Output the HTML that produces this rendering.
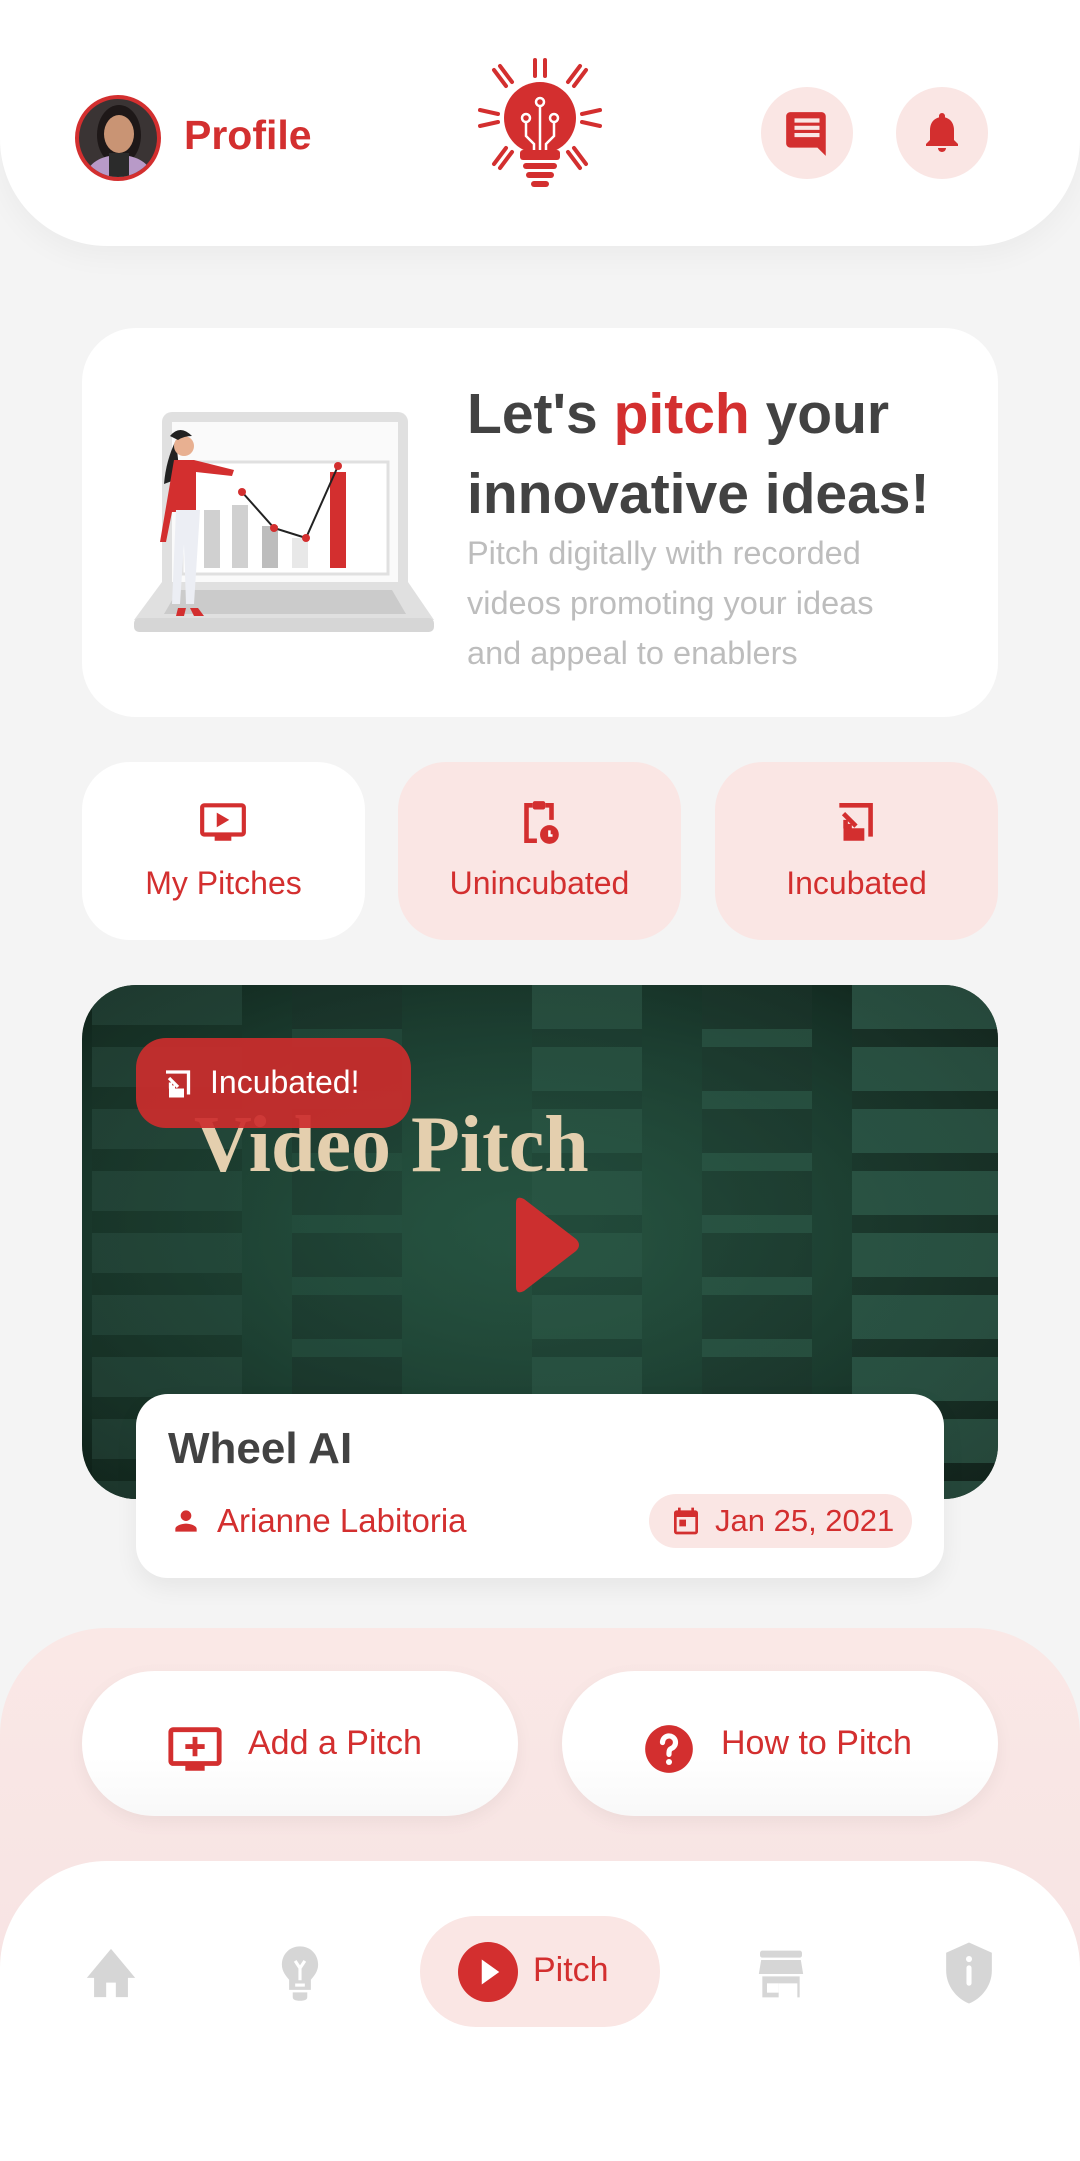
<!DOCTYPE html>
<html><head><meta charset="utf-8"><style>
*{margin:0;padding:0;box-sizing:border-box}
body{width:1080px;height:2106px;background:#f4f4f4;font-family:"Liberation Sans",sans-serif;position:relative;overflow:hidden}
.abs{position:absolute}
.red{color:#d32f2f}
.header{left:0;top:0;width:1080px;height:246px;background:#fff;border-radius:0 0 107px 107px;box-shadow:0 10px 30px rgba(0,0,0,.04)}
.card{background:#fff}
.tab{top:762px;width:283px;height:178px;border-radius:48px;text-align:center}
.btn{top:1671px;width:436px;height:145px;border-radius:73px;background:linear-gradient(#fff 60%,#f8f8f8);box-shadow:0 6px 18px rgba(0,0,0,.05)}
</style></head><body>

<div class="abs header"></div>
<!-- avatar -->
<div class="abs" style="left:75px;top:95px;width:86px;height:86px;border-radius:50%;border:4px solid #d32f2f;overflow:hidden;background:#3a3434">
<div class="abs" style="left:18px;top:6px;width:44px;height:60px;border-radius:50%;background:#1e1818"></div>
<div class="abs" style="left:25px;top:16px;width:30px;height:38px;border-radius:50%;background:#c99474"></div>
<div class="abs" style="left:8px;top:56px;width:64px;height:40px;border-radius:50% 50% 0 0;background:#b89ac8"></div>
<div class="abs" style="left:30px;top:54px;width:20px;height:30px;background:#2b2b2b"></div>
</div>
<div class="abs red" style="left:184px;top:112px;font-size:41px;font-weight:bold">Profile</div>
<!-- logo -->
<svg class="abs" style="left:468px;top:56px" width="144" height="144" viewBox="0 0 144 144">
<g fill="#d32f2f">
<circle cx="72" cy="62" r="36"/>
<rect x="52" y="94" width="40" height="10" rx="3"/>
<rect x="55" y="107" width="34" height="6" rx="3"/>
<rect x="58" y="116" width="28" height="6" rx="3"/>
<rect x="63" y="125" width="18" height="6" rx="3"/>
<g stroke="#d32f2f" stroke-width="4" stroke-linecap="round">
<line x1="67" y1="20" x2="67" y2="4"/><line x1="77" y1="20" x2="77" y2="4"/>
<line x1="38" y1="30" x2="26" y2="14"/><line x1="44" y1="26" x2="32" y2="10"/>
<line x1="106" y1="30" x2="118" y2="14"/><line x1="100" y1="26" x2="112" y2="10"/>
<line x1="30" y1="58" x2="12" y2="54"/><line x1="30" y1="66" x2="12" y2="70"/>
<line x1="114" y1="58" x2="132" y2="54"/><line x1="114" y1="66" x2="132" y2="70"/>
<line x1="38" y1="92" x2="26" y2="108"/><line x1="44" y1="96" x2="32" y2="112"/>
<line x1="106" y1="92" x2="118" y2="108"/><line x1="100" y1="96" x2="112" y2="112"/>
</g></g>
<g stroke="#fff" stroke-width="2.5" fill="none">
<circle cx="72" cy="46" r="4"/><line x1="72" y1="50" x2="72" y2="94"/>
<circle cx="58" cy="62" r="4"/><path d="M58 66 V80 L66 88 V94"/>
<circle cx="86" cy="62" r="4"/><path d="M86 66 V80 L78 88 V94"/>
</g></svg>
<!-- chat / bell -->
<div class="abs" style="left:761px;top:87px;width:92px;height:92px;border-radius:50%;background:#fae6e4"></div>
<svg class="abs" style="left:782px;top:108px" width="50" height="50" viewBox="0 0 24 24"><path fill="#d32f2f" d="M20 2H4c-1.1 0-2 .9-2 2v13c0 1.1.9 2 2 2h13l4 4V4c0-1.1-.9-2-2-2zM18 14H6v-2h12v2zm0-3.5H6v-2h12v2zM18 7H6V5h12v2z"/></svg>
<div class="abs" style="left:896px;top:87px;width:92px;height:92px;border-radius:50%;background:#fae6e4"></div>
<svg class="abs" style="left:918px;top:108px" width="48" height="48" viewBox="0 0 24 24"><path fill="#d32f2f" d="M12 22c1.1 0 2-.9 2-2h-4c0 1.1.9 2 2 2zm6-6v-5c0-3.1-1.6-5.6-4.5-6.3V4c0-.8-.7-1.5-1.5-1.5s-1.5.7-1.5 1.5v.7C7.6 5.4 6 7.9 6 11v5l-2 2v1h16v-1l-2-2z"/></svg>

<!-- hero -->
<div class="abs card" style="left:82px;top:328px;width:916px;height:389px;border-radius:54px"></div>
<svg class="abs" style="left:134px;top:410px" width="302" height="226" viewBox="0 0 302 226">
<rect x="28" y="2" width="246" height="180" rx="10" fill="#e0e0e0"/>
<rect x="38" y="12" width="226" height="160" fill="#fafafa"/>
<rect x="48" y="52" width="206" height="112" fill="#fff" stroke="#e0e0e0" stroke-width="3"/>
<path d="M0 210 L28 172 H274 L300 210 Z" fill="#e0e0e0"/>
<rect x="0" y="208" width="300" height="14" rx="5" fill="#d6d6d6"/>
<path d="M30 204 L44 180 H258 L272 204Z" fill="#bdbdbd" opacity=".6"/>
<rect x="70" y="100" width="16" height="58" fill="#d0d0d0"/>
<rect x="98" y="95" width="16" height="63" fill="#d0d0d0"/>
<rect x="128" y="116" width="16" height="42" fill="#bdbdbd"/>
<rect x="158" y="128" width="16" height="30" fill="#e8e8e8"/>
<rect x="196" y="62" width="16" height="96" fill="#d32f2f"/>
<polyline points="108,82 140,118 172,128 204,56" fill="none" stroke="#222" stroke-width="2"/>
<g fill="#d32f2f"><circle cx="108" cy="82" r="4"/><circle cx="140" cy="118" r="4"/><circle cx="172" cy="128" r="4"/><circle cx="204" cy="56" r="4"/></g>
<path d="M42 30 q-10 20 -12 44 l16 -6 z" fill="#222"/>
<circle cx="50" cy="36" r="10" fill="#e8b091"/>
<path d="M36 26 q10 -12 22 0 q-8 0 -14 4z" fill="#222"/>
<path d="M40 50 h20 l40 10 -2 6 -36 -4 0 40 h-24 l-6 30 -6 0z" fill="#d32f2f"/>
<path d="M42 100 h24 l-6 94 h-8 l-2 -60 -4 60 h-8z" fill="#eceef4"/>
<path d="M44 198 l8 0 -2 8 h-8z M56 198 l8 0 6 8 h-10z" fill="#d32f2f"/>
</svg>
<div class="abs" style="left:467px;top:374px;font-size:57px;font-weight:bold;color:#424242;line-height:80px">Let's <span class="red">pitch</span> your<br>innovative ideas!</div>
<div class="abs" style="left:467px;top:528px;font-size:32.5px;color:#bdbdbd;line-height:50px">Pitch digitally with recorded<br>videos promoting your ideas<br>and appeal to enablers</div>

<!-- tabs -->
<div class="abs tab" style="left:82px;background:#fff"></div>
<div class="abs tab" style="left:398px;background:#fae6e4"></div>
<div class="abs tab" style="left:715px;background:#fae6e4"></div>
<svg class="abs" style="left:198px;top:797px" width="50" height="50" viewBox="0 0 24 24"><path fill="#d32f2f" d="M21 3H3c-1.1 0-2 .9-2 2v12c0 1.1.9 2 2 2h5v2h8v-2h5c1.1 0 2-.9 2-2V5c0-1.1-.9-2-2-2zm0 14H3V5h18v12zM9 7.5v7l6-3.5z"/></svg>
<svg class="abs" style="left:514px;top:797px" width="50" height="50" viewBox="0 0 24 24"><path fill="none" stroke="#d32f2f" stroke-width="2.2" d="M11 21H6V4h3M15 4h3v7"/><rect x="9" y="2" width="6" height="4" rx="1" fill="#d32f2f"/><circle cx="17" cy="18" r="4.5" fill="#d32f2f"/><path d="M17 16v2.5h1.5" stroke="#fff" stroke-width="1.2" fill="none"/></svg>
<svg class="abs" style="left:831px;top:797px" width="50" height="50" viewBox="0 0 24 24"><path fill="none" stroke="#d32f2f" stroke-width="2.2" d="M4 4h15v15M6 8l6 6M10 14H7v-3"/><rect x="6" y="15" width="10" height="6" fill="#d32f2f"/></svg>
<div class="abs" style="left:82px;top:865px;width:283px;text-align:center;font-size:32px;color:#d32f2f">My Pitches</div>
<div class="abs" style="left:398px;top:865px;width:283px;text-align:center;font-size:32px;color:#d32f2f">Unincubated</div>
<div class="abs" style="left:715px;top:865px;width:283px;text-align:center;font-size:32px;color:#d32f2f">Incubated</div>

<!-- video -->
<div class="abs" style="left:82px;top:985px;width:916px;height:514px;border-radius:54px;overflow:hidden;background:radial-gradient(ellipse at 50% 50%,#2f5f4a,#1c3d30 60%,#0f2219)">
<div class="abs" style="left:10px;top:0;width:150px;height:514px;background:repeating-linear-gradient(#2c4f42 0 40px,#183226 40px 62px);opacity:.8"></div>
<div class="abs" style="left:210px;top:0;width:110px;height:514px;background:repeating-linear-gradient(#1a2e27 0 44px,#2a5444 44px 62px);opacity:.8"></div>
<div class="abs" style="left:450px;top:0;width:110px;height:514px;background:repeating-linear-gradient(#3a6a58 0 44px,#1e3a30 44px 62px);opacity:.7"></div>
<div class="abs" style="left:620px;top:0;width:110px;height:514px;background:repeating-linear-gradient(#1e352c 0 44px,#3b6e5b 44px 62px);opacity:.7"></div>
<div class="abs" style="left:770px;top:0;width:146px;height:514px;background:repeating-linear-gradient(#3d715e 0 44px,#1b3228 44px 62px);opacity:.8"></div>
<div class="abs" style="left:0;top:0;width:916px;height:514px;background:radial-gradient(ellipse at 45% 45%,rgba(35,80,62,.75),rgba(20,45,35,.4) 70%,rgba(0,0,0,.3))"></div>
<div class="abs" style="left:112px;top:115px;font-family:'Liberation Serif',serif;font-weight:bold;font-size:80px;color:#e4cfae">Video Pitch</div>
<svg class="abs" style="left:428px;top:210px" width="72" height="100" viewBox="0 0 72 100"><path d="M6 8 Q6 0 14 4 L66 44 Q72 50 66 56 L14 96 Q6 100 6 92Z" fill="#cc2f2f"/></svg>
</div>
<div class="abs" style="left:136px;top:1038px;width:275px;height:90px;border-radius:30px;background:rgba(204,45,45,.92)"></div>
<svg class="abs" style="left:160px;top:1066px" width="36" height="36" viewBox="0 0 24 24"><path fill="none" stroke="#fff" stroke-width="2.2" d="M4 4h15v15M6 8l6 6M10 14H7v-3"/><rect x="6" y="15" width="10" height="6" fill="#fff"/></svg>
<div class="abs" style="left:210px;top:1064px;font-size:32px;color:#fff">Incubated!</div>

<!-- info card -->
<div class="abs card" style="left:136px;top:1394px;width:808px;height:184px;border-radius:32px;box-shadow:0 10px 24px rgba(0,0,0,.06)"></div>
<div class="abs" style="left:168px;top:1424px;font-size:44px;font-weight:bold;color:#424242">Wheel AI</div>
<svg class="abs" style="left:170px;top:1505px" width="32" height="32" viewBox="0 0 24 24"><path fill="#d32f2f" d="M12 12c2.2 0 4-1.8 4-4s-1.8-4-4-4-4 1.8-4 4 1.8 4 4 4zm0 2c-2.7 0-8 1.3-8 4v2h16v-2c0-2.7-5.3-4-8-4z"/></svg>
<div class="abs" style="left:217px;top:1502px;font-size:33px;color:#d32f2f">Arianne Labitoria</div>
<div class="abs" style="left:649px;top:1494px;width:263px;height:54px;border-radius:27px;background:#fae6e4"></div>
<svg class="abs" style="left:670px;top:1505px" width="32" height="32" viewBox="0 0 24 24"><path fill="#d32f2f" d="M19 4h-1V2h-2v2H8V2H6v2H5c-1.1 0-2 .9-2 2v14c0 1.1.9 2 2 2h14c1.1 0 2-.9 2-2V6c0-1.1-.9-2-2-2zm0 16H5V9h14v11zM7 11h5v5H7z"/></svg>
<div class="abs" style="left:715px;top:1503px;font-size:31px;color:#d32f2f">Jan 25, 2021</div>

<!-- bottom pink -->
<div class="abs" style="left:0;top:1628px;width:1080px;height:500px;border-radius:107px 107px 0 0;background:linear-gradient(#fae8e6,#f6e2e2)"></div>
<div class="abs btn" style="left:82px"></div>
<div class="abs btn" style="left:562px"></div>
<svg class="abs" style="left:166px;top:1720px" width="58" height="58" viewBox="0 0 24 24"><path fill="#d32f2f" d="M21 3H3c-1.1 0-2 .9-2 2v12c0 1.1.9 2 2 2h5v2h8v-2h5c1.1 0 2-.9 2-2V5c0-1.1-.9-2-2-2zm0 14H3V5h18v12zM11 7h2v3h3v2h-3v3h-2v-3H8v-2h3z"/></svg>
<div class="abs" style="left:248px;top:1724px;font-size:34px;color:#d32f2f">Add a Pitch</div>
<svg class="abs" style="left:643px;top:1723px" width="52" height="52" viewBox="0 0 24 24"><circle cx="12" cy="12" r="11" fill="#d32f2f"/><path d="M9 9a3 3 0 1 1 4 2.8c-.8.4-1 1-1 2v.7" fill="none" stroke="#fff" stroke-width="2.4" stroke-linecap="round"/><circle cx="12" cy="18" r="1.4" fill="#fff"/></svg>
<div class="abs" style="left:721px;top:1724px;font-size:34px;color:#d32f2f">How to Pitch</div>

<!-- nav -->
<div class="abs" style="left:0;top:1861px;width:1080px;height:300px;border-radius:107px 107px 0 0;background:#fff"></div>
<div class="abs" style="left:420px;top:1916px;width:240px;height:111px;border-radius:56px;background:#fae6e4"></div>
<svg class="abs" style="left:458px;top:1942px" width="60" height="60" viewBox="0 0 24 24"><circle cx="12" cy="12" r="12" fill="#d32f2f"/><path d="M9.5 7v10l7-5z" fill="#fff"/></svg>
<div class="abs" style="left:533px;top:1951px;font-size:34px;color:#d32f2f">Pitch</div>
<svg class="abs" style="left:82px;top:1944px" width="58" height="58" viewBox="0 0 24 24"><path fill="#d6d6d6" d="M12 2 L2 14 h3 v8 h5 v-6 h4 v6 h5 v-8 h3z"/></svg>
<svg class="abs" style="left:274px;top:1944px" width="52" height="58" viewBox="0 0 20 24"><path fill="#d6d6d6" d="M10 1C5.5 1 2.5 4.5 2.5 8.5c0 3 1.8 4.8 3 6.3V19h9v-4.2c1.2-1.5 3-3.3 3-6.3C17.5 4.5 14.5 1 10 1zM7 20h6v2c0 1-1 1.5-3 1.5S7 23 7 22z"/><path d="M8 7l2 3 2-3M10 10v5M8 17h4" stroke="#fff" stroke-width="1.3" fill="none"/></svg>
<svg class="abs" style="left:752px;top:1946px" width="58" height="56" viewBox="0 0 24 24"><rect x="3" y="2" width="18" height="3" rx="1" fill="#d6d6d6"/><path d="M3.5 6h17l1 6h-19z" fill="#d6d6d6"/><path d="M4 13h16v9h-1v-6h-8v6H4z" fill="#d6d6d6"/><rect x="6" y="16" width="5" height="4" fill="#fff"/></svg>
<svg class="abs" style="left:940px;top:1940px" width="58" height="66" viewBox="0 0 22 26"><path fill="#d6d6d6" d="M11 1 L2 5 v7 c0 6 4 11 9 13 c5-2 9-7 9-13 V5z"/><rect x="10" y="10" width="2" height="8" rx="1" fill="#fff"/><circle cx="11" cy="7.5" r="1.2" fill="#fff"/></svg>
</body></html>
